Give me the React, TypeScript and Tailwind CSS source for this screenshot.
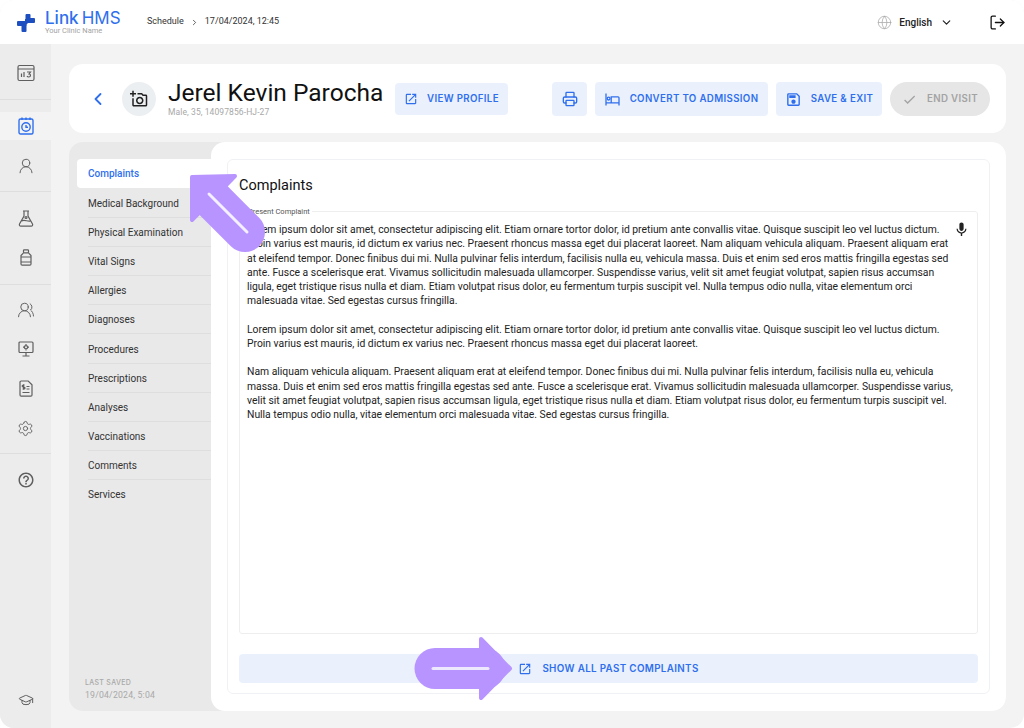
import { ChevronDown, ChevronLeft, ChevronRight, Globe, GraduationCap, LogOut, Printer, Settings, UserRound, UsersRound } from "lucide-react";
import { MdCheck, MdHelpOutline, MdMic, MdOpenInNew, MdOutlineAddAPhoto, MdOutlineSave } from "react-icons/md";

const menuItems = [
  "Complaints",
  "Medical Background",
  "Physical Examination",
  "Vital Signs",
  "Allergies",
  "Diagnoses",
  "Procedures",
  "Prescriptions",
  "Analyses",
  "Vaccinations",
  "Comments",
  "Services",
];

const paragraphs = [
  [
    "Lorem ipsum dolor sit amet, consectetur adipiscing elit. Etiam ornare tortor dolor, id pretium ante convallis vitae. Quisque suscipit leo vel luctus dictum.",
    "Proin varius est mauris, id dictum ex varius nec. Praesent rhoncus massa eget dui placerat laoreet. Nam aliquam vehicula aliquam. Praesent aliquam erat",
    "at eleifend tempor. Donec finibus dui mi. Nulla pulvinar felis interdum, facilisis nulla eu, vehicula massa. Duis et enim sed eros mattis fringilla egestas sed",
    "ante. Fusce a scelerisque erat. Vivamus sollicitudin malesuada ullamcorper. Suspendisse varius, velit sit amet feugiat volutpat, sapien risus accumsan",
    "ligula, eget tristique risus nulla et diam. Etiam volutpat risus dolor, eu fermentum turpis suscipit vel. Nulla tempus odio nulla, vitae elementum orci",
    "malesuada vitae. Sed egestas cursus fringilla.",
  ],
  [
    "Lorem ipsum dolor sit amet, consectetur adipiscing elit. Etiam ornare tortor dolor, id pretium ante convallis vitae. Quisque suscipit leo vel luctus dictum.",
    "Proin varius est mauris, id dictum ex varius nec. Praesent rhoncus massa eget dui placerat laoreet.",
  ],
  [
    "Nam aliquam vehicula aliquam. Praesent aliquam erat at eleifend tempor. Donec finibus dui mi. Nulla pulvinar felis interdum, facilisis nulla eu, vehicula",
    "massa. Duis et enim sed eros mattis fringilla egestas sed ante. Fusce a scelerisque erat. Vivamus sollicitudin malesuada ullamcorper. Suspendisse varius,",
    "velit sit amet feugiat volutpat, sapien risus accumsan ligula, eget tristique risus nulla et diam. Etiam volutpat risus dolor, eu fermentum turpis suscipit vel.",
    "Nulla tempus odio nulla, vitae elementum orci malesuada vitae. Sed egestas cursus fringilla.",
  ],
];

function Logo() {
  return (
    <svg width="18" height="18" viewBox="0 0 18 18" fill="#1e4fc0" className="mt-[1px]">
      <rect x="8.5" y="0" width="5" height="7" rx="1" />
      <rect x="9" y="4" width="9" height="5" rx="1" />
      <rect x="0" y="7" width="9.5" height="5" rx="1" />
      <rect x="4.5" y="9" width="5" height="9" rx="1" />
      <rect x="8" y="5" width="2.5" height="5" />
    </svg>
  );
}

function ChartIcon() {
  return (
    <svg width="18" height="18" viewBox="0 0 18 18" fill="none" stroke="#5f5f5f" strokeWidth="1.2">
      <rect x="1" y="1.5" width="16" height="15" rx="1.5" />
      <path d="M1 5h16M4.5 13V9.5M7 13V8M10 8h3.5l-1.5 2c2 0 2 3-.2 3-1 0-1.5-.4-1.8-1" />
    </svg>
  );
}

function CalendarIcon() {
  return (
    <svg width="16" height="18" viewBox="0 0 16 18" fill="none" stroke="#2f6fed" strokeWidth="1.4">
      <rect x="1" y="2" width="14" height="15" rx="1.5" />
      <path d="M4 0.5v2.5M8 0.5v2.5M12 0.5v2.5" />
      <circle cx="8" cy="10" r="4.2" />
      <path d="M8 8v2.2h2" />
    </svg>
  );
}

function FlaskIcon() {
  return (
    <svg width="16" height="17" viewBox="0 0 16 17" fill="none" stroke="#5f5f5f" strokeWidth="1.2">
      <path d="M5 1h6M6 1v5L1.5 14a1.5 1.5 0 0 0 1.3 2.2h10.4a1.5 1.5 0 0 0 1.3-2.2L10 6V1" />
      <path d="M3.5 11c3-2 6 1 9 0" />
      <circle cx="8" cy="7.5" r="1" />
    </svg>
  );
}

function BottleIcon() {
  return (
    <svg width="12" height="17" viewBox="0 0 12 17" fill="none" stroke="#5f5f5f" strokeWidth="1.2">
      <rect x="3.5" y="0.8" width="5" height="3" rx="0.8" />
      <path d="M3.5 3.8L1 6.5V15a1.2 1.2 0 0 0 1.2 1.2h7.6A1.2 1.2 0 0 0 11 15V6.5L8.5 3.8" />
      <path d="M1 8h10M1 13h10" />
    </svg>
  );
}

function MonitorIcon() {
  return (
    <svg width="16" height="16" viewBox="0 0 16 16" fill="none" stroke="#5f5f5f" strokeWidth="1.2">
      <rect x="1" y="1" width="14" height="10.5" rx="1" />
      <path d="M8 11.5V15M4.5 15h7" />
      <circle cx="8" cy="6.2" r="1.6" />
      <path d="M8 3v1M8 8.4v1M5 6.2h1M10 6.2h1" />
    </svg>
  );
}

function ReceiptIcon() {
  return (
    <svg width="14" height="17" viewBox="0 0 14 17" fill="none" stroke="#5f5f5f" strokeWidth="1.2">
      <path d="M1 2.2A1.2 1.2 0 0 1 2.2 1h7L13 4.8V15a1.2 1.2 0 0 1-1.2 1.2H2.2A1.2 1.2 0 0 1 1 15Z" />
      <path d="M7.5 6.5h3M7.5 9h3M3.5 12.5h7M5.6 5H4.2a1 1 0 0 0 0 2h.8a1 1 0 0 1 0 2H3.5M4.6 4.2v5.6" />
    </svg>
  );
}

function BedIcon() {
  return (
    <svg width="15" height="13" viewBox="0 0 15 13" fill="none" stroke="currentColor" strokeWidth="1.3">
      <path d="M1 0.5V12.5M1 9.8H14M14 12.5V4.8a1 1 0 0 0-1-1H6.2V9.8" />
      <circle cx="3.6" cy="5.6" r="1.4" />
    </svg>
  );
}

function NavIcon({ children, active }: { children: React.ReactNode; active?: boolean }) {
  return <div className={`flex h-[28px] items-center justify-center ${active ? "bg-[#f3f3f3]" : ""}`}>{children}</div>;
}

function ActionButton({ children, className }: { children: React.ReactNode; className: string }) {
  return (
    <button className={`flex items-center justify-center rounded-[4px] bg-[#eaf1fd] pt-[1px] font-['Inter',sans-serif] text-[9.7px] font-semibold tracking-[0.35px] text-[#2f6fed] ${className}`}>
      {children}
    </button>
  );
}

export default function App() {
  return (
    <div className="relative h-[728px] w-[1024px] overflow-hidden bg-white font-['Roboto',sans-serif]">
      <div className="flex h-full w-full flex-col overflow-hidden rounded-[14px] bg-[#f3f3f3]">
        {/* Top bar */}
        <header className="flex h-[44px] shrink-0 items-center bg-white pl-[17px] pr-[18px]">
          <Logo />
          <div className="ml-[10px] w-[90px]">
            <div className="flex h-[17px] gap-[3px] font-['Inter',sans-serif] text-[17px] leading-[17px] text-[#2f6fed]">
              <span className="font-medium">Link</span>
              <span className="font-normal">HMS</span>
            </div>
            <div className="text-[7.5px] leading-[8px] text-[#a3a3a3]">Your Clinic Name</div>
          </div>
          <div className="ml-[12px] flex items-center text-[9px] text-[#333]">
            <span>Schedule</span>
            <ChevronRight className="mx-[6px] h-[9px] w-[9px]" strokeWidth={2} />
            <span>17/04/2024, 12:45</span>
          </div>
          <Globe className="ml-auto h-[15px] w-[15px] text-[#a8a8a8]" strokeWidth={1.2} />
          <span className="ml-[7px] text-[10px] font-medium text-[#222]">English</span>
          <ChevronDown className="ml-[8px] h-[13px] w-[13px] text-[#222]" strokeWidth={2.2} />
          <LogOut className="ml-[36px] h-[17px] w-[17px] text-[#111]" strokeWidth={1.8} />
        </header>

        <div className="flex min-h-0 flex-1">
          {/* Side rail */}
          <aside className="flex w-[51px] shrink-0 flex-col bg-[#ececec] text-[#5f5f5f]">
            <div className="border-b border-[#dedede] pb-[12px] pt-[15px]">
              <NavIcon><ChartIcon /></NavIcon>
            </div>
            <div className="mt-[12px]">
              <NavIcon active><CalendarIcon /></NavIcon>
            </div>
            <div className="border-b border-[#dedede] pb-[11px] pt-[12px]">
              <NavIcon><UserRound className="h-[18px] w-[18px]" strokeWidth={1.3} /></NavIcon>
            </div>
            <div className="flex flex-col gap-[11px] border-b border-[#dedede] pb-[13px] pt-[12px]">
              <NavIcon><FlaskIcon /></NavIcon>
              <NavIcon><BottleIcon /></NavIcon>
            </div>
            <div className="flex flex-col gap-[11px] border-b border-[#dedede] pb-[11px] pt-[11px]">
              <NavIcon><UsersRound className="h-[18px] w-[18px]" strokeWidth={1.3} /></NavIcon>
              <NavIcon><MonitorIcon /></NavIcon>
              <NavIcon><ReceiptIcon /></NavIcon>
              <div className="pt-[1px]">
                <NavIcon><Settings className="h-[17px] w-[17px]" strokeWidth={1.3} /></NavIcon>
              </div>
            </div>
            <div className="pt-[12px]">
              <NavIcon><MdHelpOutline className="h-[18px] w-[18px]" /></NavIcon>
            </div>
            <div className="mt-auto pb-[14px]">
              <NavIcon><GraduationCap className="h-[16px] w-[16px]" strokeWidth={1.5} /></NavIcon>
            </div>
          </aside>

          <main className="flex min-w-0 flex-1 flex-col pb-[17px] pl-[18px] pr-[18px] pt-[20px]">
            {/* Patient header */}
            <section className="flex h-[69px] shrink-0 items-center rounded-[14px] bg-white pl-[19px] pr-[16px]">
              <ChevronLeft className="h-[20px] w-[20px] text-[#2f6fed]" strokeWidth={2.2} />
              <div className="ml-[14px] flex h-[34px] w-[34px] items-center justify-center rounded-full bg-[#eceff1]">
                <MdOutlineAddAPhoto className="h-[18px] w-[18px] text-[#222]" />
              </div>
              <div className="ml-[12px] mb-[2px] w-[227px]">
                <div className="text-[24.5px] leading-[28px] text-[#111]">Jerel Kevin Parocha</div>
                <div className="text-[8.5px] leading-[10px] tracking-[0.1px] text-[#a8a8a8]">Male, 35, 14097856-HJ-27</div>
              </div>
              <ActionButton className="h-[32px] w-[113px] gap-[9px]">
                <MdOpenInNew className="h-[14px] w-[14px]" />
                VIEW PROFILE
              </ActionButton>
              <ActionButton className="ml-[44px] h-[34px] w-[35px]">
                <Printer className="h-[16px] w-[16px]" strokeWidth={2} />
              </ActionButton>
              <ActionButton className="ml-[8px] h-[34px] w-[173px] gap-[10px]">
                <BedIcon />
                CONVERT TO ADMISSION
              </ActionButton>
              <ActionButton className="ml-[8px] h-[34px] w-[106px] gap-[9px]">
                <MdOutlineSave className="h-[17px] w-[17px]" />
                SAVE &amp; EXIT
              </ActionButton>
              <button className="ml-[8px] flex h-[34px] w-[100px] items-center justify-center gap-[10px] rounded-full bg-[#e6e6e6] pt-[1px] font-['Inter',sans-serif] text-[9.7px] font-semibold tracking-[0.35px] text-[#a3a3a3]">
                <MdCheck className="h-[15px] w-[15px]" />
                END VISIT
              </button>
            </section>

            {/* Visit panel */}
            <section className="mt-[9px] flex min-h-0 flex-1 rounded-[14px] bg-[#e9e9e9]">
              <nav className="flex w-[142px] shrink-0 flex-col pl-[8px] pt-[17px]">
                {menuItems.map((item, idx) => (
                  <a
                    key={item}
                    className={
                      idx === 0
                        ? "flex h-[29px] items-center rounded-l-[4px] bg-white pl-[11px] text-[10px] font-medium text-[#2f6fed]"
                        : `ml-[11px] flex h-[29.1px] items-center pt-[1px] text-[10px] text-[#333] ${idx > 1 ? "border-t border-[#dedede]" : ""}`
                    }
                  >
                    {item}
                  </a>
                ))}
                <div className="mt-auto pb-[10px] pl-[8px]">
                  <div className="font-['Inter',sans-serif] text-[7px] font-medium leading-[10px] tracking-[0.3px] text-[#a8a8a8]">LAST SAVED</div>
                  <div className="mt-[2px] text-[8.7px] leading-[11px] tracking-[0.2px] text-[#a8a8a8]">19/04/2024, 5:04</div>
                </div>
              </nav>

              <div className="flex min-w-0 flex-1 rounded-[14px] bg-white p-[17px] pl-[16px] pr-[16px]">
                <div className="flex min-w-0 flex-1 flex-col rounded-[6px] border border-[#f0f1f4] px-[11px] pb-[10px]">
                  <h2 className="mt-[17px] text-[14.5px] font-normal leading-[18px] text-[#111]">Complaints</h2>
                  <div className="relative mt-[16px] flex-1 rounded-[3px] border border-[#eeeeee] pl-[7px] pt-[11px]">
                    <span className="absolute left-[6px] top-[-5px] bg-white px-[2px] text-[7.5px] leading-[9px] text-[#555]">Present Complaint</span>
                    <MdMic className="absolute right-[7px] top-[9px] h-[17px] w-[17px] text-[#222]" />
                    {paragraphs.map((lines, idx) => (
                      <p key={idx} className="mb-[14px] text-[10.35px] leading-[14.3px] text-[#222]">
                        {lines.map((line) => (
                          <span key={line} className="block whitespace-nowrap">{line}</span>
                        ))}
                      </p>
                    ))}
                  </div>
                  <ActionButton className="mt-[20px] h-[29px] shrink-0 gap-[9px] rounded-[2px] text-[9.8px]">
                    <MdOpenInNew className="h-[14px] w-[14px]" />
                    <span className="ml-[1px]">SHOW ALL PAST COMPLAINTS</span>
                  </ActionButton>
                </div>
              </div>
            </section>
          </main>
        </div>
      </div>

      {/* Annotation arrows */}
      <svg className="pointer-events-none absolute left-0 top-0" width="1024" height="728" viewBox="0 0 1024 728" fill="none">
        <path d="M212 199L245 232" stroke="#b794ff" strokeWidth="40" strokeLinecap="round" />
        <path d="M192 177L235 176L192 220Z" fill="#b794ff" stroke="#b794ff" strokeWidth="4" strokeLinejoin="round" />
        <path d="M209 194L247 232" stroke="#f4f0ff" strokeWidth="3" strokeLinecap="round" />
        <path d="M435 668.5H485" stroke="#b794ff" strokeWidth="41" strokeLinecap="round" />
        <path d="M481 639L510 668.5L481 698Z" fill="#b794ff" stroke="#b794ff" strokeWidth="4" strokeLinejoin="round" />
        <path d="M433 668.5H488" stroke="#eee8ff" strokeWidth="3" strokeLinecap="round" />
      </svg>
    </div>
  );
}
